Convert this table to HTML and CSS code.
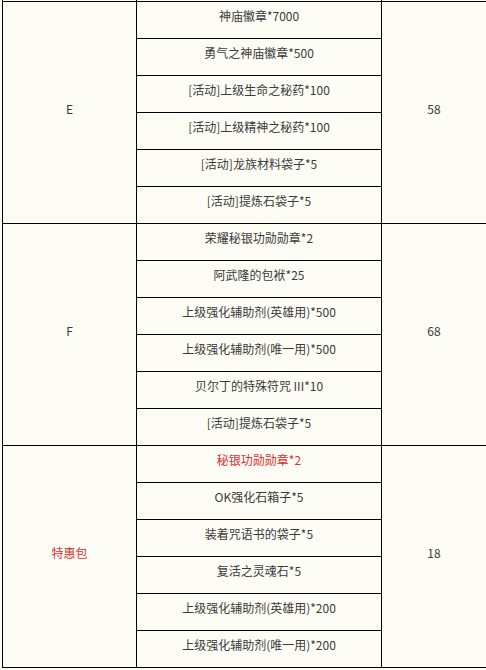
FILE: index.html
```html
<!DOCTYPE html>
<html lang="zh-CN">
<head>
<meta charset="utf-8">
<title>礼包内容</title>
<link rel="stylesheet" href="styles.css">
</head>
<body>
<table class="pack-table">
  <colgroup>
    <col class="col-name">
    <col class="col-item">
    <col class="col-price">
  </colgroup>
  <tbody>
    <tr class="prev-row"><td></td><td></td><td></td></tr>
    <tr><td class="group" rowspan="6">E</td><td>神庙徽章*7000</td><td class="group" rowspan="6">58</td></tr>
    <tr><td>勇气之神庙徽章*500</td></tr>
    <tr><td>[活动]上级生命之秘药*100</td></tr>
    <tr><td>[活动]上级精神之秘药*100</td></tr>
    <tr><td>[活动]龙族材料袋子*5</td></tr>
    <tr><td>[活动]提炼石袋子*5</td></tr>
    <tr><td class="group" rowspan="6">F</td><td>荣耀秘银功勋勋章*2</td><td class="group" rowspan="6">68</td></tr>
    <tr><td>阿武隆的包袱*25</td></tr>
    <tr><td>上级强化辅助剂(英雄用)*500</td></tr>
    <tr><td>上级强化辅助剂(唯一用)*500</td></tr>
    <tr><td>贝尔丁的特殊符咒 III*10</td></tr>
    <tr><td>[活动]提炼石袋子*5</td></tr>
    <tr><td class="group red" rowspan="6">特惠包</td><td class="red">秘银功勋勋章*2</td><td class="group" rowspan="6">18</td></tr>
    <tr><td>OK强化石箱子*5</td></tr>
    <tr><td>装着咒语书的袋子*5</td></tr>
    <tr><td>复活之灵魂石*5</td></tr>
    <tr><td>上级强化辅助剂(英雄用)*200</td></tr>
    <tr><td>上级强化辅助剂(唯一用)*200</td></tr>
  </tbody>
</table>
</body>
</html>
```

FILE: styles.css
```css
html, body {
  margin: 0;
  padding: 0;
  background: #fdfdf6;
}

body {
  font-family: "Noto Sans CJK SC", "Noto Sans", sans-serif;
  font-size: 12px;
  color: #3a3a3a;
}

.pack-table {
  border-collapse: collapse;
  table-layout: fixed;
  width: 484px;
  margin-left: 2px;
}

.col-name { width: 134px; }
.col-item { width: 245px; }
.col-price { width: 105px; }

.pack-table td {
  border: 1px solid #000;
  text-align: center;
  vertical-align: middle;
  padding: 5px 0 13px;
  line-height: 18px;
  height: 18px;
  box-sizing: content-box;
  white-space: nowrap;
}

.pack-table .prev-row td {
  padding: 0;
  height: 1px;
  line-height: 0;
  border-top: none;
}

.red {
  color: #e02e2e;
}
```
